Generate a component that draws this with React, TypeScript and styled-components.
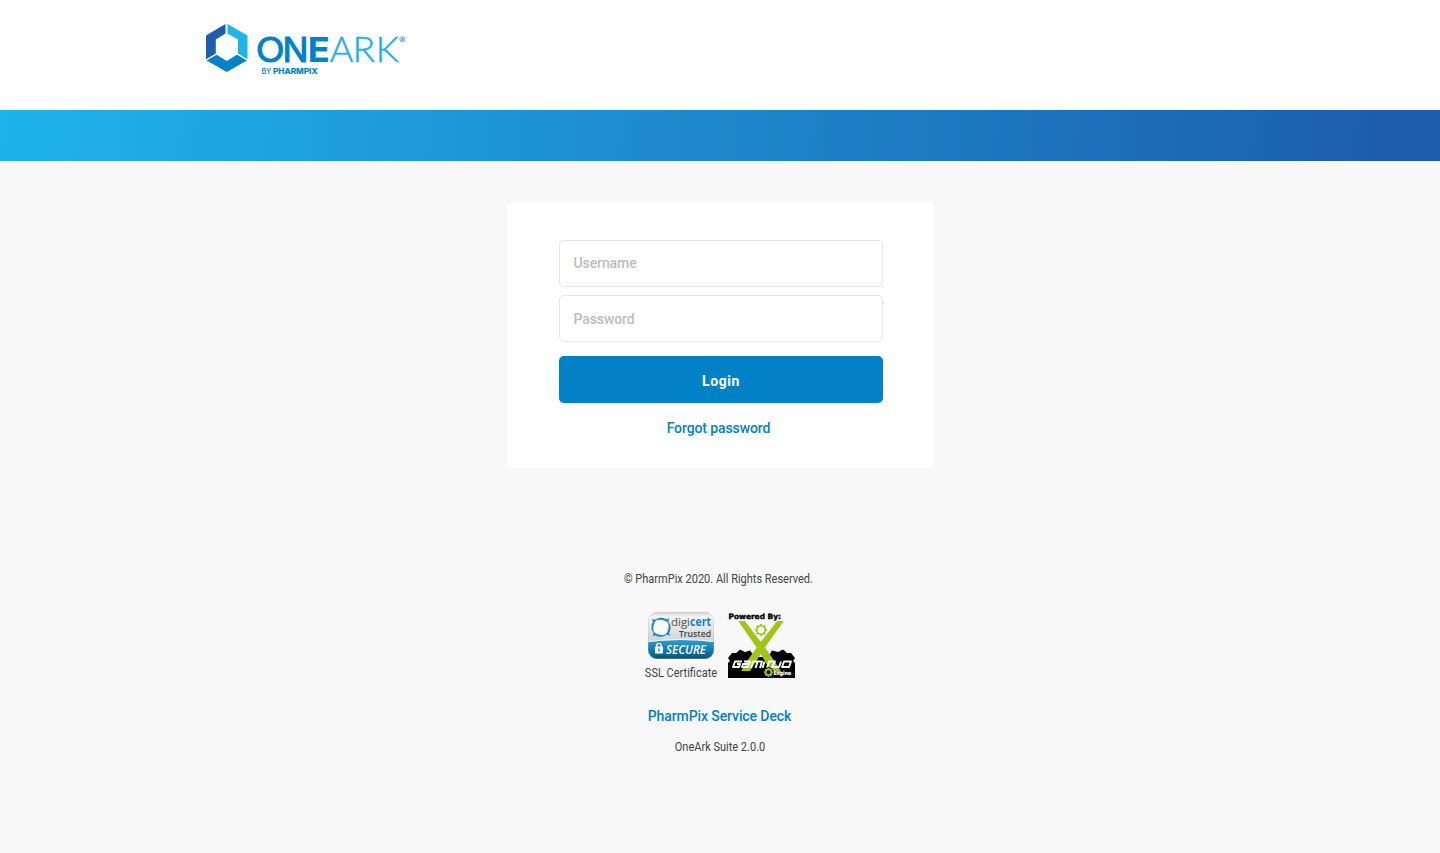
import React from "react";
import styled, { createGlobalStyle } from "styled-components";

const GlobalStyle = createGlobalStyle`
  *, *::before, *::after { box-sizing: border-box; }
  body { margin: 0; background: #f8f8f8; font-family: Roboto, sans-serif; color: #444; }
`;

const Page = styled.div`
  min-height: 853px;
  background: #f8f8f8;
`;

const Header = styled.header`
  height: 110px;
  padding: 18px 0 0 200px;
  background: #fff;
`;

const Banner = styled.div`
  height: 51px;
  background: linear-gradient(95deg, #1eb4e9 0%, #1c5dad 97%);
`;

const Main = styled.main`
  display: flex;
  flex-direction: column;
  align-items: center;
  padding-top: 41px;
`;

const Card = styled.form`
  display: flex;
  flex-direction: column;
  width: 427px;
  height: 266px;
  padding: 38px 51px 0 52px;
  margin-left: 1px;
  background: #fff;
  border-radius: 5px;
`;

const FieldBox = styled.div`
  display: grid;
  height: 47px;
  margin-bottom: 8px;
  > * { grid-area: 1 / 1; }
`;

const Input = styled.input`
  width: 100%;
  height: 47px;
  padding: 0 14px;
  border: 1px solid #e6e6e6;
  border-radius: 5px;
  background: #fff;
  outline: none;
  font: 500 14px Roboto, sans-serif;
  &:not(:placeholder-shown) + label { visibility: hidden; }
`;

const FieldLabel = styled.label<{ $drop: number }>`
  justify-self: start;
  padding-left: 14.5px;
  color: #bdbdbd;
  font-size: 14px;
  font-weight: 500;
  line-height: ${(p) => 46 + p.$drop * 2}px;
  height: 47px;
  letter-spacing: -0.1px;
  transform: scaleY(1.07);
  pointer-events: none;
`;

const LoginButton = styled.button`
  height: 47px;
  margin-top: 6px;
  padding: 1px 0 0;
  border: 0;
  border-radius: 5px;
  background: #0281c6;
  color: #fff;
  font: 700 14px Roboto, sans-serif;
  letter-spacing: 0.6px;
`;

const LoginText = styled.span`
  display: inline-block;
  transform: scaleY(1.1);
`;

const TextLink = styled.a<{ $top: number; $shift: number }>`
  align-self: center;
  margin-top: ${(p) => p.$top}px;
  margin-right: ${(p) => p.$shift}px;
  color: #0281c6;
  font-size: 14px;
  font-weight: 500;
  line-height: 20px;
  letter-spacing: -0.1px;
  text-decoration: none;
  transform: scaleY(1.07);
`;

const Footer = styled.footer`
  display: flex;
  flex-direction: column;
  align-items: center;
  padding-top: 104px;
`;

const Small = styled.span<{ $shift?: number; $top?: number }>`
  margin-top: ${(p) => p.$top ?? 0}px;
  margin-right: ${(p) => p.$shift ?? 0}px;
  font-size: 11px;
  line-height: 16px;
  white-space: nowrap;
  transform: scaleY(1.1);
`;

const Badges = styled.div`
  display: flex;
  align-items: flex-start;
  gap: 10px;
  height: 72px;
  margin-top: 24px;
  margin-left: 1px;
`;

const SslBadge = styled.div`
  display: flex;
  flex-direction: column;
  align-items: center;
  gap: 7px;
  width: 73px;
`;

const Art = styled.svg`
  display: block;
  flex: none;
`;

function OneArkLogo() {
  return (
    <Art width="210" height="62" viewBox="0 0 210 62" fontFamily="Inter, sans-serif">
      <path d="M25.5 6V15.6L15.8 21.4V35.6L6 41.2V17.4Z" fill="#1c5dad" />
      <path d="M27.5 6L47.5 17.4V41.2L38 35.6V21.4L27.5 15.6Z" fill="#1eb4e9" />
      <path d="M6.6 42.4L16.6 36.8L26.8 43L37 36.8L46.8 42.4L26.8 54Z" fill="#0281c6" />
      <g fill="#0281c6" stroke="#0281c6" fontSize="34">
        <text x="55.7" y="43.7" strokeWidth="0.9" textLength="29" lengthAdjust="spacingAndGlyphs">O</text>
        <text x="82.6" y="43.7" strokeWidth="1.1" textLength="26" lengthAdjust="spacingAndGlyphs">N</text>
        <text x="107.8" y="43.8" strokeWidth="0.2" fontWeight="700" textLength="22" lengthAdjust="spacingAndGlyphs">E</text>
      </g>
      <g fill="#1eaee4" stroke="#1eaee4" strokeWidth="0.45" fontFamily="Lato, sans-serif" fontSize="34.6" fontWeight="300">
        <text x="129.8" y="43.9" textLength="23.6" lengthAdjust="spacingAndGlyphs">A</text>
        <text x="152.5" y="43.9" textLength="22.6" lengthAdjust="spacingAndGlyphs">R</text>
        <text x="175.8" y="43.9" textLength="23.2" lengthAdjust="spacingAndGlyphs">K</text>
      </g>
      <g fill="#0281c6" fontSize="8">
        <text x="61.5" y="56" stroke="#0281c6" strokeWidth="0.2" textLength="9.5" lengthAdjust="spacingAndGlyphs">BY</text>
        <text x="73" y="56" fontWeight="700" stroke="#0281c6" strokeWidth="0.2" textLength="44.5" lengthAdjust="spacingAndGlyphs">PHARMPIX</text>
      </g>
      <circle cx="202.3" cy="21.2" r="2.5" fill="none" stroke="#2b82bd" strokeWidth="0.7" />
      <text x="202.3" y="22.7" textAnchor="middle" fontSize="4" fontWeight="700" fill="#2b82bd">R</text>
    </Art>
  );
}

function DigicertSeal() {
  return (
    <Art width="66" height="47" viewBox="0 0 66 47" fontFamily="'Open Sans', sans-serif">
      <defs>
        <linearGradient id="sealTop" x2="0" y2="1">
          <stop offset="0" stopColor="#d0d0d0" />
          <stop offset="0.1" stopColor="#f6f6f6" />
          <stop offset="0.6" stopColor="#d2d6d9" />
        </linearGradient>
        <linearGradient id="sealBase" x2="0" y2="1">
          <stop offset="0" stopColor="#279ed1" />
          <stop offset="0.5" stopColor="#147db1" />
          <stop offset="1" stopColor="#075078" />
        </linearGradient>
        <clipPath id="sealShape"><rect width="66" height="47" rx="9" /></clipPath>
      </defs>
      <g clipPath="url(#sealShape)">
        <rect width="66" height="47" fill="url(#sealTop)" />
        <path d="M0 30Q33 26 66 30V47H0Z" fill="url(#sealBase)" />
        <path d="M0 29.5Q33 25.5 66 29.5" fill="none" stroke="#eef8fc" strokeWidth="1" />
      </g>
      <rect x="0.5" y="0.5" width="65" height="46" rx="8.5" fill="none" stroke="#aebdc6" strokeOpacity="0.35" />
      <circle cx="13" cy="15.3" r="8" fill="#fbfdfe" />
      <g transform="translate(13 15.3)" fill="#2084c4">
        {[0, 90, 180, 270].map((angle) => (
          <path key={angle} d="M-6.5 -6.5C-3.5 -10 1.5 -10.5 5.8 -8L8.2 -9.3L7.2 -4.6C3.5 -7.8 -2 -8.6 -6.5 -6.5Z" transform={`rotate(${angle})`} />
        ))}
      </g>
      <text x="23" y="14" fontSize="11.5" fill="#5c5c5c" stroke="#5c5c5c" strokeWidth="0.15" textLength="19" lengthAdjust="spacingAndGlyphs">digi</text>
      <text x="42" y="14" fontSize="11.5" fontWeight="700" fill="#1681bd" textLength="21" lengthAdjust="spacingAndGlyphs">cert</text>
      <text x="31" y="25" fontSize="9.5" fontWeight="600" fill="#444" textLength="32" lengthAdjust="spacingAndGlyphs">Trusted</text>
      <rect x="7" y="34.5" width="8" height="7" rx="0.7" fill="#fff" />
      <path d="M8.7 35V33.7a2.3 2.3 0 0 1 4.6 0V35" fill="none" stroke="#fff" strokeWidth="1.3" />
      <path d="M11 36.6V39.5" stroke="#147db1" strokeWidth="1.3" />
      <text x="18" y="41.7" fontSize="11.6" fontStyle="italic" fontWeight="600" fill="#fff" textLength="40" lengthAdjust="spacingAndGlyphs">SECURE</text>
    </Art>
  );
}

function Gear({ x, y, size, width }: { x: number; y: number; size: number; width: number }) {
  return (
    <g transform={`translate(${x} ${y})`} fill="none" stroke="#9fc51a">
      <circle r={size} strokeWidth={width} />
      {[0, 45, 90, 135, 180, 225, 270, 315].map((angle) => (
        <path key={angle} d={`M0 ${-size}V${-size - 1.7}`} strokeWidth="2.2" transform={`rotate(${angle})`} />
      ))}
    </g>
  );
}

function GaminuoBadge() {
  return (
    <Art width="68" height="67" viewBox="0 0 68 67" fontFamily="'DejaVu Sans', sans-serif">
      <path d="M0 66V51L2 49L0 46L4 41H8L12 37.5L17 40L22 38.5L27 45H40L44 38.5L50 40L55 37.5L59 41H63L67 46L65 49L67 51V66Z" fill="#000" />
      <path d="M10 9H17Q25 20 33 30Q44 45 54 61L42 58Q30 36 10 9Z" fill="#9fc51a" />
      <path d="M49 9H56Q47 21 36 37L22 59H13Q22 44 32 31Z" fill="#9fc51a" />
      <Gear x={33} y={18} size={4.2} width={1.6} />
      <text x="0.5" y="6.6" fontSize="7.4" fontWeight="700" fill="#000" stroke="#000" strokeWidth="0.4" textLength="52.5" lengthAdjust="spacingAndGlyphs">Powered By:</text>
      <g fill="none" stroke="#fff" strokeWidth="1.9" strokeLinejoin="round">
        <path d="M14 49.5H7L5 55H11L12 52H9" />
        <path d="M16 49.5H22L20 55H14L15 52H21" />
        <path d="M23 56L25 49.5H34L32 56M29.5 50L27.5 56" />
        <path d="M36.5 49.5L34.5 56M39 56L41 49.5H47L44 55H51L53 49.5" />
        <path d="M56 49.5H63L61 55H54Z" />
      </g>
      <circle cx="40.5" cy="60.3" r="5" fill="#000" />
      <Gear x={40.5} y={60.3} size={2.7} width={1.5} />
      <text x="45.5" y="62.5" fontSize="5.5" fontWeight="700" fill="#fff" stroke="#fff" strokeWidth="0.2" textLength="17.5" lengthAdjust="spacingAndGlyphs">Engine</text>
    </Art>
  );
}

function Field({ id, label, type, drop }: { id: string; label: string; type: string; drop: number }) {
  return (
    <FieldBox>
      <Input id={id} type={type} placeholder=" " />
      <FieldLabel htmlFor={id} $drop={drop}>{label}</FieldLabel>
    </FieldBox>
  );
}

export default function App() {
  return (
    <Page>
      <GlobalStyle />
      <Header><OneArkLogo /></Header>
      <Banner />
      <Main>
        <Card onSubmit={(event) => event.preventDefault()}>
          <Field id="username" label="Username" type="text" drop={0} />
          <Field id="password" label="Password" type="password" drop={1} />
          <LoginButton type="submit"><LoginText>Login</LoginText></LoginButton>
          <TextLink href="#" $top={15} $shift={5}>Forgot password</TextLink>
        </Card>
        <Footer>
          <Small $shift={3}>© PharmPix 2020. All Rights Reserved.</Small>
          <Badges>
            <SslBadge>
              <DigicertSeal />
              <Small $shift={1}>SSL Certificate</Small>
            </SslBadge>
            <GaminuoBadge />
          </Badges>
          <TextLink href="#" $top={22} $shift={1}>PharmPix Service Deck</TextLink>
          <Small $top={14}>OneArk Suite 2.0.0</Small>
        </Footer>
      </Main>
    </Page>
  );
}
